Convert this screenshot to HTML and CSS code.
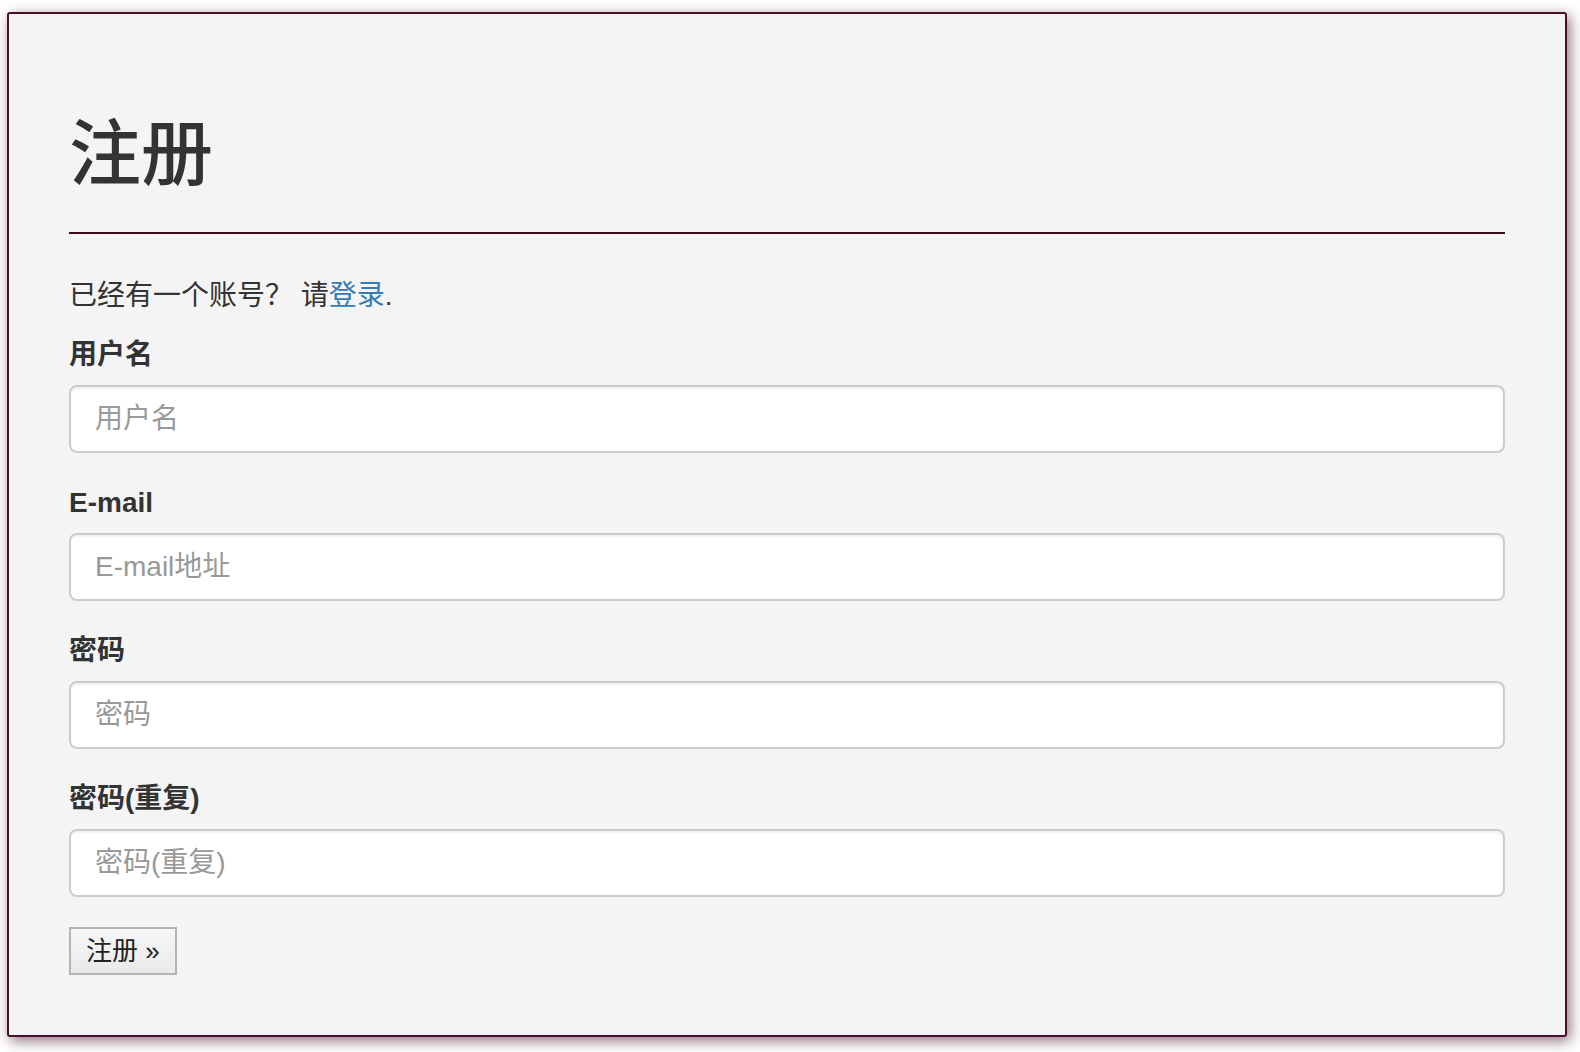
FILE: index.html
```html
<!DOCTYPE html>
<html lang="zh-CN">
<head>
<meta charset="utf-8">
<title>注册</title>
<link rel="stylesheet" href="styles.css">
</head>
<body>
<div class="panel">
  <div class="page-header">
    <h1 class="title">注册</h1>
  </div>
  <p class="intro">已经有一个账号？ 请<a href="#" class="link">登录</a>.</p>
  <form class="form">
    <div class="form-group">
      <label class="label" for="username">用户名</label>
      <input class="input" id="username" type="text" placeholder="用户名">
    </div>
    <div class="form-group">
      <label class="label" for="email">E-mail</label>
      <input class="input" id="email" type="text" placeholder="E-mail地址">
    </div>
    <div class="form-group">
      <label class="label" for="pw1">密码</label>
      <input class="input" id="pw1" type="password" placeholder="密码">
    </div>
    <div class="form-group">
      <label class="label" for="pw2">密码(重复)</label>
      <input class="input" id="pw2" type="password" placeholder="密码(重复)">
    </div>
    <button class="btn" type="button">注册 »</button>
  </form>
</div>
</body>
</html>
```
FILE: styles.css
```css
html, body {
  margin: 0;
  padding: 0;
  background: #ffffff;
}
body {
  font-family: "Liberation Sans", "Noto Sans CJK SC", sans-serif;
  font-size: 28px;
  line-height: 40px;
  color: #333333;
  padding: 12px 13px 15px 7px;
}
.panel {
  border: 2px solid #4c0f2b;
  border-radius: 3px;
  background: #f4f4f4;
  box-shadow: 3px 4px 14px rgba(60, 20, 40, 0.6);
  padding: 101px 60px 60px 60px;
}
.page-header {
  border-bottom: 2px solid #3c0a1f;
  padding-bottom: 18px;
  margin-bottom: 42px;
}
.title {
  margin: 0 0 20px 0;
  font-size: 72px;
  line-height: 79px;
  font-weight: 500;
  font-family: "Liberation Sans", "Noto Sans CJK SC", sans-serif;
  color: #333333;
}
.intro {
  margin: 0 0 19px 0;
}
.link {
  color: #337ab7;
  text-decoration: none;
}
.form {
  margin: 0;
}
.form-group {
  display: flex;
  flex-direction: column;
  margin-bottom: 30px;
}
.label {
  font-weight: 700;
  margin-bottom: 10px;
}
.input {
  box-sizing: border-box;
  height: 68px;
  border: 2px solid #cccccc;
  border-radius: 8px;
  background: #ffffff;
  padding: 0 24px;
  font-family: "Liberation Sans", "Noto Sans CJK SC", sans-serif;
  font-size: 28px;
  color: #555555;
  box-shadow: inset 0 2px 2px rgba(0, 0, 0, 0.06);
  outline: none;
}
.input::placeholder {
  color: #999999;
}
.btn {
  display: block;
  box-sizing: border-box;
  height: 48px;
  padding: 0 15px;
  border: 2px solid #b3b3b3;
  border-radius: 0;
  background: linear-gradient(#f7f7f7, #e9e9e9);
  font-family: "Liberation Sans", "Noto Sans CJK SC", sans-serif;
  font-size: 26px;
  line-height: 44px;
  color: #222222;
}
```
